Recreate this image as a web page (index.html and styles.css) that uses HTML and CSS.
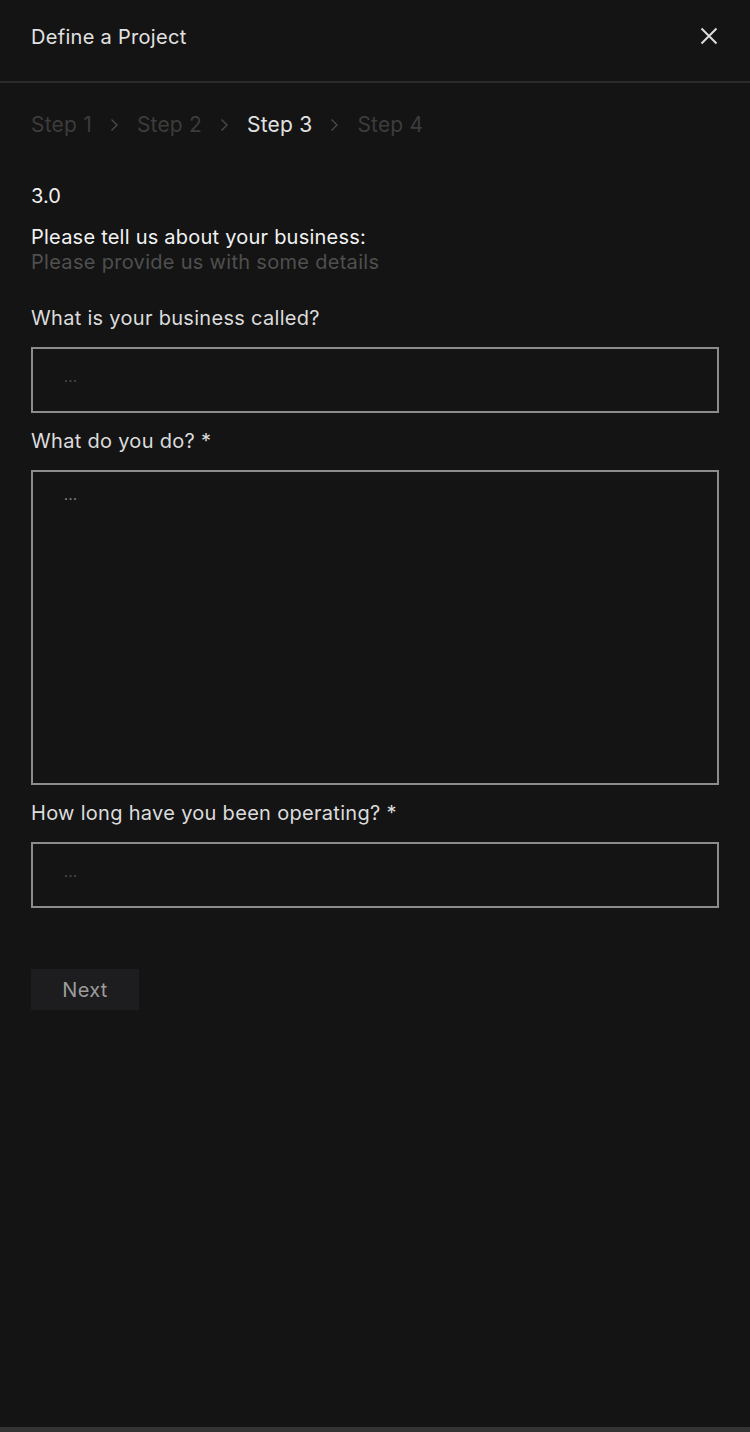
FILE: index.html
```html
<!DOCTYPE html>
<html lang="en">
<head>
<meta charset="utf-8">
<title>Define a Project</title>
<link rel="stylesheet" href="styles.css">
</head>
<body>
<div class="page">
  <header class="header">
    <h1 class="title">Define a Project</h1>
    <button class="close" aria-label="Close">
      <svg width="18" height="18" viewBox="0 0 18 18"><path d="M1.5 1.5 L16.5 16.5 M16.5 1.5 L1.5 16.5" stroke="#dcdcdc" stroke-width="2" fill="none"/></svg>
    </button>
  </header>
  <main class="content">
    <nav class="steps">
      <span class="step">Step 1</span>
      <svg class="chev" width="9" height="14" viewBox="0 0 9 14"><path d="M1.5 1.5 L7 7 L1.5 12.5" stroke="#4a4a4a" stroke-width="1.4" fill="none"/></svg>
      <span class="step">Step 2</span>
      <svg class="chev" width="9" height="14" viewBox="0 0 9 14"><path d="M1.5 1.5 L7 7 L1.5 12.5" stroke="#4a4a4a" stroke-width="1.4" fill="none"/></svg>
      <span class="step active">Step 3</span>
      <svg class="chev" width="9" height="14" viewBox="0 0 9 14"><path d="M1.5 1.5 L7 7 L1.5 12.5" stroke="#4a4a4a" stroke-width="1.4" fill="none"/></svg>
      <span class="step">Step 4</span>
    </nav>
    <div class="section-num">3.0</div>
    <div class="intro">
      <div class="intro-title">Please tell us about your business:</div>
      <div class="intro-sub">Please provide us with some details</div>
    </div>
    <form class="form">
      <label class="label">What is your business called?</label>
      <div class="field"><span class="ph dim">...</span></div>
      <label class="label">What do you do? *</label>
      <div class="field area"><span class="ph">...</span></div>
      <label class="label">How long have you been operating? *</label>
      <div class="field"><span class="ph dim">...</span></div>
      <div class="actions"><button type="button" class="next">Next</button></div>
    </form>
  </main>
  <div class="bottom-bar"></div>
</div>
</body>
</html>
```

FILE: styles.css
```css
* { box-sizing: border-box; }
html, body { margin: 0; padding: 0; }
body {
  background: #141414;
  color: #e6e6e6;
  font-family: Inter, "Noto Sans", "Liberation Sans", sans-serif;
}
.page {
  width: 750px;
  height: 1432px;
  display: flex;
  flex-direction: column;
  background: #141414;
}
.header {
  height: 83px;
  padding: 0 31px;
  display: flex;
  align-items: flex-start;
  justify-content: space-between;
  border-bottom: 2px solid #2a2a2a;
}
.title {
  margin: 25px 0 0;
  font-size: 20px;
  line-height: 24px;
  font-weight: 400;
  color: #e2e2e2;
  letter-spacing: 0.3px;
}
.close {
  margin-top: 27px;
  margin-right: 1px;
  padding: 0;
  border: 0;
  background: none;
  width: 18px;
  height: 18px;
  display: flex;
}
.content {
  flex: 1;
  padding: 30px 31px 0;
  display: flex;
  flex-direction: column;
}
.steps {
  display: flex;
  align-items: center;
  gap: 18px;
  height: 24px;
}
.step {
  font-size: 21px;
  line-height: 24px;
  color: #3c3c3c;
  letter-spacing: 0.2px;
}
.step.active { color: #e2e2e2; }
.section-num {
  margin-top: 47px;
  font-size: 20px;
  line-height: 24px;
  color: #f0f0f0;
}
.intro { margin-top: 17px; }
.intro-title {
  font-size: 20px;
  line-height: 25px;
  color: #f2f2f2;
  letter-spacing: 0.23px;
}
.intro-sub {
  font-size: 20px;
  line-height: 25px;
  color: #4f4f4f;
  letter-spacing: 0.3px;
}
.form {
  margin-top: 31px;
  display: flex;
  flex-direction: column;
}
.label {
  font-size: 20px;
  line-height: 24px;
  color: #dcdcdc;
  letter-spacing: 0.3px;
  margin-bottom: 17px;
}
.field {
  height: 66px;
  border: 2px solid #8c8c8c;
  padding: 17px 31px 0;
  margin-bottom: 16px;
}
.field.area { height: 315px; padding-top: 12px; }
.ph {
  font-size: 14px;
  line-height: 20px;
  color: #9a9a9a;
  letter-spacing: 0.5px;
}
.ph.dim { color: #5a5a5a; }
.actions { margin-top: 45px; }
.next {
  width: 108px;
  height: 41px;
  border: 0;
  background: #1d1d1f;
  color: #9c9c9c;
  font-family: Inter, "Noto Sans", "Liberation Sans", sans-serif;
  font-size: 20px;
  padding: 0;
  letter-spacing: 0.3px;
}
.bottom-bar {
  height: 5px;
  background: #333333;
  margin-top: auto;
}
```
